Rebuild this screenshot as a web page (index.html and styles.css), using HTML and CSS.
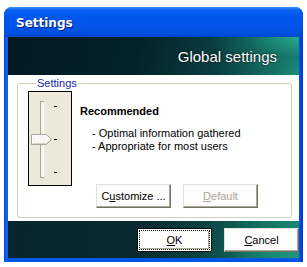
FILE: index.html
```html
<!DOCTYPE html>
<html lang="en">
<head>
    <meta charset="UTF-8">
    <meta name="viewport" content="width=device-width, initial-scale=1.0">
    <title>Settings</title>
    <link rel="stylesheet" href="styles.css">
</head>
<body>
    <div class="window">
        <div class="titlebar">Settings</div>

        <div class="client">
            <!-- Banner -->
            <div class="banner">
                <span class="banner-title">Global settings</span>
            </div>

            <!-- Settings group -->
            <div class="main">
                <fieldset class="group">
                    <legend>Settings</legend>
                    <div class="group-body">
                        <div class="slider">
                            <svg width="42" height="93" viewBox="0 0 42 93">
                                <!-- track -->
                                <rect x="11.5" y="9.5" width="3" height="76" fill="#f4f3ee" stroke="#aca899"/>
                                <line x1="14.5" y1="10" x2="14.5" y2="85" stroke="#ffffff"/>
                                <!-- ticks -->
                                <line x1="25" y1="14.5" x2="28" y2="14.5" stroke="#000"/>
                                <line x1="25" y1="47.5" x2="28" y2="47.5" stroke="#000"/>
                                <line x1="25" y1="80.5" x2="28" y2="80.5" stroke="#000"/>
                                <!-- thumb -->
                                <polygon points="2.5,42.5 17.5,42.5 22.5,47.5 17.5,52.5 2.5,52.5" fill="#f7f6f0" stroke="#aca899"/>
                                <polyline points="3.5,51.5 17,51.5 21.5,47.5" fill="none" stroke="#d6d3c4"/>
                                <polyline points="3.5,51.5 3.5,43.5 17,43.5" fill="none" stroke="#ffffff"/>
                            </svg>
                        </div>
                        <div class="info">
                            <div class="level">Recommended</div>
                            <ul class="points">
                                <li>- Optimal information gathered</li>
                                <li>- Appropriate for most users</li>
                            </ul>
                            <div class="group-buttons">
                                <button class="btn">C<u>u</u>stomize ...</button>
                                <button class="btn" disabled><u>D</u>efault</button>
                            </div>
                        </div>
                    </div>
                </fieldset>
            </div>

            <!-- Dialog buttons -->
            <div class="footer">
                <button class="btn btn-default"><span class="focus"><u>O</u>K</span></button>
                <button class="btn"><u>C</u>ancel</button>
            </div>
        </div>
    </div>
</body>
</html>
```

FILE: styles.css
```css
body {
    margin: 0;
    background-color: #ffffff;
    font-family: "Liberation Sans", Arial, sans-serif;
    font-size: 11px;
    color: #000;
}
.window {
    margin: 7px 0 0 4px;
    width: 299px;
    height: 255px;
    box-sizing: border-box;
    padding: 0 4px 4px;
    border-radius: 8px 8px 0 0;
    background: linear-gradient(90deg, #0831d9 0, #166aee 2px, #0058e6 4px, #0055e5 295px, #0831d9 299px);
    display: flex;
    flex-direction: column;
}
.titlebar {
    height: 30px;
    margin: 0 -4px;
    padding-left: 12px;
    border-radius: 8px 8px 0 0;
    background: linear-gradient(#3d95ff 0, #0a5ff0 3px, #0058ee 8px, #0054e9 18px, #0050e0 26px, #0047cf 30px);
    color: #fff;
    font-family: "DejaVu Sans", sans-serif;
    font-weight: bold;
    font-size: 12px;
    line-height: 32px;
    text-shadow: 1px 1px 0 #0a1e74;
}
.client {
    flex: 1;
    display: flex;
    flex-direction: column;
}
.banner {
    height: 38px;
    display: flex;
    align-items: center;
    justify-content: flex-end;
    padding-right: 22px;
    background:
        radial-gradient(ellipse 90px 34px at 100% 0%, rgba(38, 170, 140, 0.95), rgba(20, 110, 100, 0.5) 60%, transparent 100%),
        linear-gradient(100deg, #021a1f 0%, #03232a 45%, #0a3f42 72%, #146c62 90%, #1b8f78 100%);
}
.banner-title {
    color: #fff;
    font-size: 15px;
    text-shadow: 0 0 2px #000;
}
.main {
    height: 146px;
    background-color: #ffffff;
    padding: 2px 7px 0 9px;
    box-sizing: border-box;
}
.group {
    margin: 0;
    padding: 1px 10px 7px;
    border: 1px solid #d0d0bf;
    border-radius: 3px;
    height: 141px;
    box-sizing: border-box;
}
.group legend {
    margin-left: 8px;
    padding: 0 1px;
    color: #1027a8;
    line-height: 13px;
}
.group-body {
    display: flex;
    gap: 8px;
}
.slider {
    width: 42px;
    height: 93px;
    border: 1px solid #000;
    background-color: #ece9d8;
    flex: none;
}
.slider svg {
    display: block;
}
.info {
    flex: 1;
    padding-top: 14px;
}
.level {
    font-weight: bold;
    line-height: 13px;
}
.points {
    list-style: none;
    margin: 9px 0 0 12px;
    padding: 0;
    line-height: 13px;
}
.group-buttons {
    display: flex;
    gap: 12px;
    margin: 31px 0 0 16px;
}
.btn {
    width: 75px;
    height: 24px;
    padding: 0;
    box-sizing: border-box;
    font-family: "Liberation Sans", Arial, sans-serif;
    font-size: 11px;
    color: #000;
    background-color: #fcfcfb;
    border: 1px solid;
    border-color: #e4e2d8 #716f64 #716f64 #e4e2d8;
    box-shadow: inset -1px -1px 0 #aca899;
}
.btn:disabled {
    color: #aca899;
}
.footer {
    flex: 1;
    display: flex;
    justify-content: flex-end;
    align-items: center;
    gap: 12px;
    background:
        radial-gradient(ellipse 70px 30px at 100% 100%, rgba(30, 150, 120, 0.9), transparent 100%),
        linear-gradient(100deg, #06262b 0%, #072a30 45%, #0b3f41 65%, #137060 85%, #1a8c76 100%);
}
.btn-default {
    border: 1px solid #000;
    padding: 1px;
    box-shadow: none;
}
.btn-default .focus {
    display: block;
    height: 100%;
    box-sizing: border-box;
    border: 1px dotted #000;
    line-height: 18px;
    box-shadow: inset -1px -1px 0 #aca899;
}
```
